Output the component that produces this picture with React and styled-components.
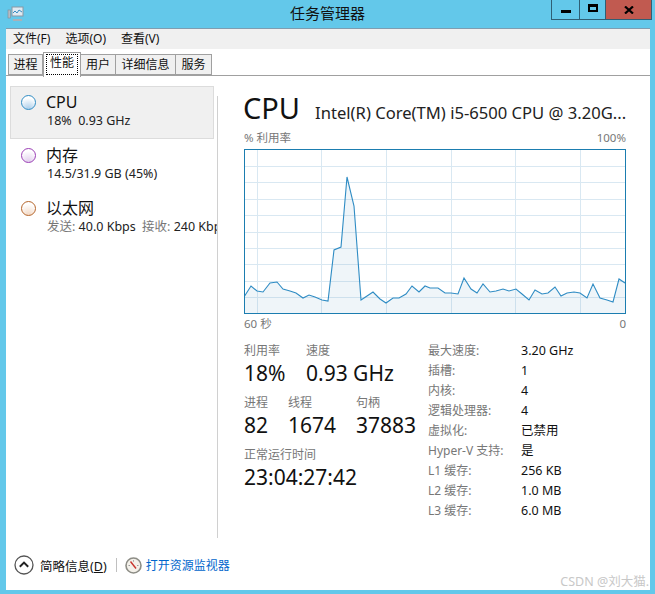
import React from "react";
import styled, { createGlobalStyle } from "styled-components";

const FONT = `"Noto Sans", "Noto Sans CJK SC", sans-serif`;

const GlobalStyle = createGlobalStyle`
  html, body {
    margin: 0;
    padding: 0;
    background: #63c8ea;
    font-family: ${FONT};
  }
`;

const Frame = styled.div`
  position: relative;
  width: 655px;
  height: 594px;
  overflow: hidden;
  background: #63c8ea;
  display: flex;
  flex-direction: column;
`;

const TitleBar = styled.div`
  height: 28px;
  flex: none;
  display: grid;
  grid-template-columns: 1fr auto 1fr;
  align-items: start;
`;

const AppIcon = styled.svg`
  margin: 6px 0 0 7px;
  display: block;
`;

const Title = styled.div`
  font-size: 15px;
  line-height: 26px;
  color: #111;
`;

const Caption = styled.div`
  justify-self: end;
  margin-right: 3px;
  display: flex;
  height: 20px;
  border: solid #2f5f75;
  border-width: 0 1px 1px 1px;
  box-sizing: border-box;
`;

const CaptionBtn = styled.div`
  width: ${(p) => p.$w}px;
  display: flex;
  align-items: center;
  justify-content: center;
  background: ${(p) => (p.$close ? "#c15a50" : "transparent")};
  border-left: ${(p) => (p.$first ? "none" : "1px solid #2f5f75")};
  box-sizing: border-box;
`;

const MinGlyph = styled.div`
  width: 10px;
  height: 3px;
  margin-top: 4px;
  background: #000;
`;

const MaxGlyph = styled.div`
  width: 10px;
  height: 8px;
  margin-top: -3px;
  border: 2px solid #000;
  border-top-width: 3px;
  box-sizing: border-box;
`;

const Client = styled.div`
  flex: 1;
  margin: 0 5px 4px 6px;
  background: #fff;
  border-top: 1px solid #7f9db0;
  display: flex;
  flex-direction: column;
  min-height: 0;
`;

const MenuBar = styled.div`
  height: 20px;
  flex: none;
  background: #f0f0f0;
  display: flex;
  padding-left: 7px;
  gap: 15px;
  font-size: 12px;
  line-height: 20px;
  color: #111;
`;

const TabStrip = styled.div`
  height: 27px;
  flex: none;
  box-sizing: border-box;
  padding: 3px 0 0 2px;
  border-bottom: 1px solid #a0a0a0;
  display: flex;
  align-items: flex-end;
`;

const Tab = styled.div`
  box-sizing: border-box;
  width: ${(p) => p.$w}px;
  height: ${(p) => (p.$active ? 25 : 21)}px;
  margin-bottom: ${(p) => (p.$active ? -2 : 0)}px;
  position: relative;
  z-index: ${(p) => (p.$active ? 1 : 0)};
  border: 1px solid #a0a0a0;
  border-left-width: ${(p) => (p.$active ? 1 : 0)}px;
  border-bottom: ${(p) => (p.$active ? "none" : "1px solid #a0a0a0")};
  background: ${(p) => (p.$active ? "#fff" : "#f0f0f0")};
  font-size: 12px;
  text-align: center;
  line-height: 19px;
  color: #111;
  &:first-child {
    border-left-width: 1px;
  }
`;

const FocusText = styled.span`
  display: block;
  margin: 1px 2px 0;
  height: 19px;
  line-height: 16px;
  border: 1px dotted #000;
`;

const Body = styled.div`
  flex: 1;
  display: flex;
  min-height: 0;
`;

const Sidebar = styled.div`
  width: 211px;
  flex: none;
  overflow: hidden;
  padding: 10px 0 0 4px;
  box-sizing: border-box;
`;

const Divider = styled.div`
  width: 1px;
  flex: none;
  background: #d0d0d0;
  margin: 20px 0 0;
`;

const Item = styled.div`
  width: 204px;
  height: 53px;
  box-sizing: border-box;
  display: flex;
  padding-left: 10px;
  background: ${(p) => (p.$active ? "#f0f0f0" : "transparent")};
  border: 1px solid ${(p) => (p.$active ? "#dcdcdc" : "transparent")};
`;

const Dot = styled.div`
  width: 15px;
  height: 15px;
  margin-top: 8px;
  flex: none;
  border-radius: 50%;
  box-sizing: border-box;
  border: 1.5px solid ${(p) => p.$color};
  background: radial-gradient(circle at 50% 100%, ${(p) => p.$fill}, #fff 75%);
`;

const ItemText = styled.div`
  margin-left: 10px;
  white-space: nowrap;
`;

const ItemName = styled.div`
  font-size: 16px;
  line-height: 20px;
  margin-top: 5px;
  color: #111;
`;

const ItemSub = styled.div`
  font-size: 12.5px;
  line-height: 16px;
  margin-top: 1px;
  margin-left: 1px;
  color: #222;
`;

const Muted = styled.span`
  color: #777;
`;

const MutedGap = styled(Muted)`
  margin-left: 3px;
`;

const Main = styled.div`
  flex: 1;
  padding: 0 24px 0 26px;
  min-width: 0;
`;

const Heading = styled.div`
  display: flex;
  align-items: baseline;
  margin-top: 11px;
  height: 43px;
  white-space: nowrap;
`;

const HeadCpu = styled.span`
  font-size: 29px;
  line-height: 41px;
  color: #111;
  margin-left: -1px;
`;

const HeadModel = styled.span`
  font-size: 16.6px;
  margin-left: 15px;
  color: #222;
`;

const AxisRow = styled.div`
  display: flex;
  justify-content: space-between;
  font-size: 11.5px;
  line-height: 16px;
  color: #777;
`;

const ChartBox = styled.svg`
  display: block;
  width: 382px;
  height: 165px;
  margin-top: 3px;
`;

const BottomAxis = styled(AxisRow)`
  margin-top: 2px;
`;

const Stats = styled.div`
  display: flex;
  margin-top: 11px;
`;

const StatsLeft = styled.div`
  width: 184px;
  flex: none;
`;

const StatRow = styled.div`
  display: flex;
  margin-bottom: 8px;
`;

const Stat = styled.div`
  width: ${(p) => p.$w}px;
  flex: none;
  white-space: nowrap;
`;

const StatLabel = styled.div`
  font-size: 12px;
  line-height: 16px;
  color: #777;
`;

const StatValue = styled.div`
  font-size: 21px;
  line-height: 27px;
  margin-top: 1px;
  color: #111;
`;

const Specs = styled.div`
  display: grid;
  grid-template-columns: 93px auto;
  grid-auto-rows: 20px;
  font-size: 12px;
  line-height: 20px;
  margin-top: -2px;
  white-space: nowrap;
`;

const SpecLabel = styled.div`
  color: #777;
`;

const SpecValue = styled.div`
  font-size: 12.5px;
  color: #111;
`;

const Footer = styled.div`
  height: 52px;
  flex: none;
  box-sizing: border-box;
  display: flex;
  align-items: center;
  padding: 2px 0 0 8px;
`;

const FooterLabel = styled.span`
  font-size: 12.5px;
  margin-left: 6px;
  color: #111;
  u {
    text-decoration: underline;
  }
`;

const FooterSep = styled.div`
  width: 1px;
  height: 14px;
  background: #c0c0c0;
  margin: 0 8px 0 9px;
`;

const FooterLink = styled.span`
  font-size: 12px;
  margin-left: 4px;
  color: #0066cc;
`;

const Watermark = styled.div`
  position: absolute;
  right: 6px;
  bottom: 4px;
  font-size: 12.5px;
  line-height: 16px;
  color: #c8c8c8;
`;

// traced from the curve, in page coordinates
const curve = [
  [244, 297], [251, 286], [257, 291], [263, 292], [270, 283], [277, 282], [283, 289], [290, 291],
  [296, 293], [303, 298], [309, 295], [315, 297], [322, 300], [328, 301], [334, 250], [341, 247],
  [347, 177], [354, 206], [361, 300], [367, 296], [373, 292], [380, 299], [386, 303], [393, 298],
  [399, 298], [406, 294], [412, 286], [419, 292], [425, 286], [430, 288], [438, 288], [445, 293],
  [451, 293], [458, 294], [464, 278], [471, 289], [477, 293], [483, 284], [490, 292], [496, 291],
  [503, 289], [509, 291], [516, 289], [522, 294], [529, 300], [535, 290], [542, 294], [548, 293],
  [555, 287], [561, 296], [567, 293], [574, 292], [580, 293], [587, 298], [593, 284], [600, 298],
  [607, 300], [613, 302], [619, 279], [625, 283],
];
const gridY = [166, 182, 199, 215, 232, 248, 264, 281, 297];
const gridX = [257, 321, 386, 451, 515, 580];
const line = curve.map((p) => p.join(",")).join(" ");

const Chart = () => (
  <ChartBox viewBox="244 149 382 165">
    {gridY.map((y) => (
      <line key={y} x1="244" x2="626" y1={y + 0.5} y2={y + 0.5} stroke="#d9e8f2" />
    ))}
    {gridX.map((x) => (
      <line key={x} x1={x + 0.5} x2={x + 0.5} y1="149" y2="314" stroke="#d9e8f2" />
    ))}
    <polygon points={`244,314 ${line} 626,314`} fill="#7fa9d0" fillOpacity="0.12" />
    <polyline points={line} fill="none" stroke="#2f8cc4" strokeWidth="1.1" />
    <rect x="244.5" y="149.5" width="381" height="164" fill="none" stroke="#1b7db0" />
  </ChartBox>
);

const specs = [
  ["最大速度:", "3.20 GHz"],
  ["插槽:", "1"],
  ["内核:", "4"],
  ["逻辑处理器:", "4"],
  ["虚拟化:", "已禁用"],
  ["Hyper-V 支持:", "是"],
  ["L1 缓存:", "256 KB"],
  ["L2 缓存:", "1.0 MB"],
  ["L3 缓存:", "6.0 MB"],
];

const tabs = [
  ["进程", 35],
  ["性能", 38, true],
  ["用户", 35],
  ["详细信息", 60],
  ["服务", 36],
];

const App = () => (
  <Frame>
    <GlobalStyle />
    <TitleBar>
      <AppIcon width="17" height="16" viewBox="0 0 17 16">
        <rect x="5" y="1" width="11" height="9" fill="#dfeaf2" stroke="#8a97a3" />
        <path d="M6 7l2-2 2 2 2-3 3 2" fill="none" stroke="#3a8cc0" />
        <rect x="1" y="4" width="2.5" height="8" fill="#b5bcc4" stroke="#7f8a94" strokeWidth="0.6" />
        <path d="M6 13h9v2H6z" fill="#a8b0b8" />
      </AppIcon>
      <Title>任务管理器</Title>
      <Caption>
        <CaptionBtn $w={27} $first><MinGlyph /></CaptionBtn>
        <CaptionBtn $w={26}><MaxGlyph /></CaptionBtn>
        <CaptionBtn $w={46} $close>
          <svg width="10" height="8" viewBox="0 0 10 8">
            <path d="M1 0.5l8 7M9 0.5l-8 7" stroke="#000" strokeWidth="2.2" />
          </svg>
        </CaptionBtn>
      </Caption>
    </TitleBar>
    <Client>
      <MenuBar>
        <span>文件(F)</span>
        <span>选项(O)</span>
        <span>查看(V)</span>
      </MenuBar>
      <TabStrip>
        {tabs.map(([label, w, active]) => (
          <Tab key={label} $w={w} $active={active}>
            {active ? <FocusText>{label}</FocusText> : label}
          </Tab>
        ))}
      </TabStrip>
      <Body>
        <Sidebar>
          <Item $active>
            <Dot $color="#2f8cc4" $fill="#a9cdea" />
            <ItemText>
              <ItemName>CPU</ItemName>
              <ItemSub>18%&nbsp; 0.93 GHz</ItemSub>
            </ItemText>
          </Item>
          <Item>
            <Dot $color="#9b3fb5" $fill="#e0cdec" />
            <ItemText>
              <ItemName>内存</ItemName>
              <ItemSub>14.5/31.9 GB (45%)</ItemSub>
            </ItemText>
          </Item>
          <Item>
            <Dot $color="#b5652a" $fill="#f2d8c4" />
            <ItemText>
              <ItemName>以太网</ItemName>
              <ItemSub>
                <Muted>发送:</Muted> 40.0 Kbps <MutedGap>接收:</MutedGap> 240 Kbps
              </ItemSub>
            </ItemText>
          </Item>
        </Sidebar>
        <Divider />
        <Main>
          <Heading>
            <HeadCpu>CPU</HeadCpu>
            <HeadModel>Intel(R) Core(TM) i5-6500 CPU @ 3.20G...</HeadModel>
          </Heading>
          <AxisRow>
            <span>% 利用率</span>
            <span>100%</span>
          </AxisRow>
          <Chart />
          <BottomAxis>
            <span>60 秒</span>
            <span>0</span>
          </BottomAxis>
          <Stats>
            <StatsLeft>
              <StatRow>
                <Stat $w={62}>
                  <StatLabel>利用率</StatLabel>
                  <StatValue>18%</StatValue>
                </Stat>
                <Stat $w={120}>
                  <StatLabel>速度</StatLabel>
                  <StatValue>0.93 GHz</StatValue>
                </Stat>
              </StatRow>
              <StatRow>
                <Stat $w={44}>
                  <StatLabel>进程</StatLabel>
                  <StatValue>82</StatValue>
                </Stat>
                <Stat $w={68}>
                  <StatLabel>线程</StatLabel>
                  <StatValue>1674</StatValue>
                </Stat>
                <Stat $w={70}>
                  <StatLabel>句柄</StatLabel>
                  <StatValue>37883</StatValue>
                </Stat>
              </StatRow>
              <Stat $w={180}>
                <StatLabel>正常运行时间</StatLabel>
                <StatValue>23:04:27:42</StatValue>
              </Stat>
            </StatsLeft>
            <Specs>
              {specs.map(([k, v]) => (
                <React.Fragment key={k}>
                  <SpecLabel>{k}</SpecLabel>
                  <SpecValue>{v}</SpecValue>
                </React.Fragment>
              ))}
            </Specs>
          </Stats>
        </Main>
      </Body>
      <Footer>
        <svg width="20" height="20" viewBox="0 0 20 20">
          <circle cx="10" cy="10" r="9" fill="#fff" stroke="#555" strokeWidth="1.3" />
          <path d="M5.8 11.8L10 7.6l4.2 4.2" fill="none" stroke="#222" strokeWidth="2" />
        </svg>
        <FooterLabel>简略信息(<u>D</u>)</FooterLabel>
        <FooterSep />
        <svg width="17" height="17" viewBox="0 0 17 17">
          <circle cx="8.5" cy="8.5" r="7.5" fill="#f4f1ea" stroke="#8d8d86" strokeWidth="1.6" />
          <path d="M5.5 4.5l5.5 7" stroke="#c8342c" strokeWidth="1.4" />
          <path d="M3.5 8.5h1.5M8.5 3.2v1.5M12 8.5h1.5" stroke="#999" />
        </svg>
        <FooterLink>打开资源监视器</FooterLink>
      </Footer>
    </Client>
    <Watermark>CSDN @刘大猫.</Watermark>
  </Frame>
);

export default App;
